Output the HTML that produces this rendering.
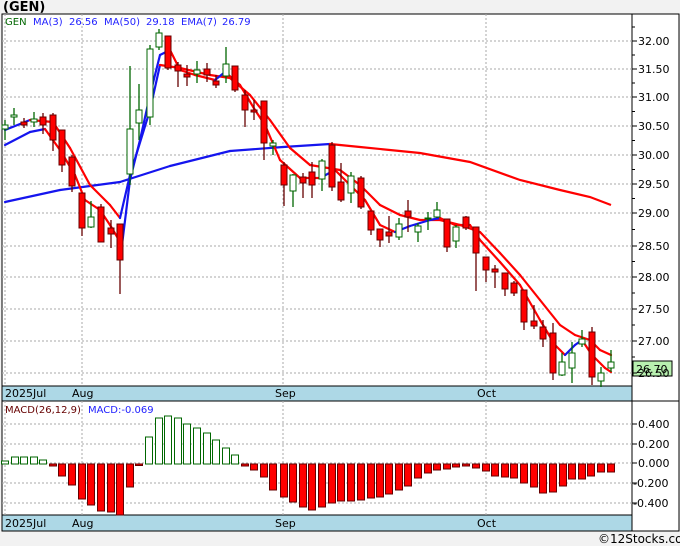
<!DOCTYPE html>
<html><head><meta charset="utf-8"><style>
html,body{margin:0;padding:0;background:#f2f2f2;width:680px;height:546px;overflow:hidden}
svg{display:block}
text{font-family:"DejaVu Sans","Liberation Sans",sans-serif;font-size:11px;white-space:pre}
</style></head><body>
<svg id="s" width="680" height="546" xmlns="http://www.w3.org/2000/svg">
<rect x="0" y="0" width="680" height="546" fill="#f2f2f2"/>
<text x="3" y="11" style="font-size:13px;font-weight:bold" fill="#000">(GEN)</text>
<rect x="2" y="14" width="677" height="517" fill="#fff" stroke="#000"/>
<line x1="632" y1="14" x2="632" y2="531" stroke="#000"/>
<rect x="2" y="386" width="630" height="15" fill="#add8e6" stroke="#000"/>
<rect x="2" y="515" width="630" height="16" fill="#add8e6" stroke="#000"/>
<line x1="632" y1="401" x2="679" y2="401" stroke="#000"/>
<g id="grid" stroke="#aaa" stroke-dasharray="2,2"></g>
<g id="c"></g>
<text x="5" y="397" fill="#000">2025Jul</text><text x="72" y="397" fill="#000">Aug</text><text x="275" y="397" fill="#000">Sep</text><text x="477" y="397" fill="#000">Oct</text>
<text x="5" y="527" fill="#000">2025Jul</text><text x="72" y="527" fill="#000">Aug</text><text x="275" y="527" fill="#000">Sep</text><text x="477" y="527" fill="#000">Oct</text>
<text x="5" y="25" style="font-size:10px" fill="#060">GEN</text>
<text x="33" y="25" style="font-size:10px" fill="#22f">MA(3)</text>
<text x="69" y="25" style="font-size:10px" fill="#22f">26.56</text>
<text x="104" y="25" style="font-size:10px" fill="#22f">MA(50)</text>
<text x="146" y="25" style="font-size:10px" fill="#22f">29.18</text>
<text x="181" y="25" style="font-size:10px" fill="#22f">EMA(7)</text>
<text x="222" y="25" style="font-size:10px" fill="#22f">26.79</text>
<text x="5" y="413" style="font-size:10px" fill="#600">MACD(26,12,9)</text>
<text x="88" y="413" style="font-size:10px" fill="#22f">MACD:-0.069</text>
<rect x="633" y="361" width="39" height="15" fill="#b8f0b0" stroke="#000"/>
<text x="636" y="373" fill="#000">26.70</text>
<text x="598" y="543" style="font-size:12px" fill="#000">©12Stocks.com</text>
</svg>
<script>
var NS="http://www.w3.org/2000/svg",g=document.getElementById('c'),gr=document.getElementById('grid'),s=document.getElementById('s');
function el(p,t,a){var e=document.createElementNS(NS,t);for(var k in a)e.setAttribute(k,a[k]);p.appendChild(e);return e}
var ticks=[[41,"32.00"],[69,"31.50"],[97,"31.00"],[126,"30.50"],[155,"30.00"],[184,"29.50"],[213,"29.00"],[246,"28.50"],[277,"28.00"],[309,"27.50"],[341,"27.00"],[373,"26.50"]];
ticks.forEach(function(t){el(gr,'line',{x1:2,x2:632,y1:t[0],y2:t[0]});el(s,'line',{x1:632,x2:637,y1:t[0],y2:t[0],stroke:'#000'});el(s,'text',{x:638,y:t[0]+4,fill:'#000'}).textContent=t[1];});
for(var i=0;i<ticks.length-1;i++){var m=(ticks[i][0]+ticks[i+1][0])/2;el(s,'line',{x1:632,x2:635,y1:m,y2:m,stroke:'#000'});}
el(s,'line',{x1:632,x2:635,y1:27,y2:27,stroke:'#000'});
[[424,"0.400"],[444,"0.200"],[463,"0.000"],[483,"-0.200"],[503,"-0.400"]].forEach(function(t){el(gr,'line',{x1:2,x2:632,y1:t[0],y2:t[0]});el(s,'line',{x1:632,x2:637,y1:t[0],y2:t[0],stroke:'#000'});el(s,'text',{x:t[1][0]=='-'?633:638,y:t[0]+4,fill:'#000'}).textContent=t[1];});
[5,82,283,486].forEach(function(x){el(gr,'line',{x1:x,x2:x,y1:14,y2:386});el(gr,'line',{x1:x,x2:x,y1:401,y2:515});});
var C=[[5,125,129,120,140,'g'],[14,115,117,108,125,'g'],[24,122,125,118,128,'r'],[34,119,122,112,127,'g'],[43,117,125,113,134,'r'],[53,115,140,113,151,'r'],[62,130,165,130,172,'r'],[72,157,186,155,192,'r'],[82,193,228,193,236,'r'],[91,217,227,201,228,'g'],[101,207,242,204,242,'r'],[111,228,234,220,248,'r'],[120,224,260,224,294,'r'],[130,129,174,66,185,'g'],[139,110,123,84,140,'g'],[150,49,117,45,125,'g'],[159,33,47,29,50,'g'],[168,36,68,36,70,'r'],[178,65,71,62,87,'r'],[187,74,77,65,86,'r'],[197,70,74,61,83,'g'],[207,69,75,63,82,'r'],[216,81,85,75,88,'r'],[226,64,76,47,83,'g'],[235,66,90,66,92,'r'],[245,95,110,90,127,'r'],[254,110,112,100,120,'r'],[264,101,143,101,160,'r'],[273,143,146,140,155,'g'],[284,165,185,162,206,'r'],[293,175,191,174,207,'g'],[303,177,183,173,198,'r'],[312,172,185,162,198,'r'],[322,161,179,159,191,'g'],[332,145,187,142,191,'r'],[341,182,200,163,202,'r'],[351,176,193,172,203,'g'],[361,178,207,176,209,'r'],[371,211,230,211,235,'r'],[380,229,240,229,247,'r'],[389,232,236,216,243,'r'],[399,224,237,218,240,'g'],[408,211,217,200,232,'r'],[418,226,232,223,242,'g'],[428,218,219,212,230,'g'],[437,210,217,202,218,'g'],[447,219,247,219,252,'r'],[456,227,241,225,248,'g'],[466,217,228,216,230,'r'],[476,227,253,227,291,'r'],[486,257,270,257,282,'r'],[495,269,272,265,288,'r'],[505,273,289,273,296,'r'],[514,283,293,281,296,'r'],[524,290,322,290,330,'r'],[534,321,326,305,329,'r'],[543,327,339,320,347,'r'],[553,333,373,323,380,'r'],[562,362,375,353,376,'g'],[572,353,368,342,383,'g'],[582,339,344,330,347,'g'],[592,332,377,327,385,'r'],[601,373,381,367,387,'g'],[611,362,368,350,372,'g']];
function line(pts,w){for(var i=1;i<pts.length;i++){var a=pts[i-1],b=pts[i];el(g,'line',{x1:a[0],y1:a[1],x2:b[0],y2:b[1],stroke:b[1]<a[1]?'#1515ee':'#f00','stroke-width':w,'stroke-linecap':'round'});}}
line([[5,202],[60,190],[120,182],[170,166],[230,151],[283,147],[330,144],[340,145]],2.2);
el(g,'polyline',{points:[[340,145],[360,147],[420,153],[470,162],[520,180],[560,190],[590,197],[611,205]].join(' '),fill:'none',stroke:'#f00','stroke-width':2.2});
line([[5,130],[30,120],[53,122],[70,148],[90,185],[110,205],[120,218],[130,175],[150,110],[160,65],[180,68],[210,75],[230,78],[250,95],[270,120],[290,148],[310,165],[340,170],[360,185],[380,205],[400,215],[420,220],[440,220],[460,225],[480,232],[500,253],[520,275],[540,300],[560,325],[575,335],[590,340],[600,350],[611,355]],2.2);
line([[5,145],[30,132],[45,129],[60,150],[75,175],[85,200],[100,210],[110,225],[122,245],[130,180],[140,140],[150,95],[160,55],[170,50],[180,70],[195,75],[215,80],[225,72],[240,85],[255,110],[265,125],[280,160],[300,178],[320,178],[335,170],[350,185],[365,200],[380,225],[395,232],[410,226],[430,220],[440,218],[455,225],[470,225],[480,240],[500,262],[520,285],[540,320],[555,345],[565,355],[575,345],[582,340],[592,355],[605,368],[611,372]],2.2);
C.forEach(function(c){var x=c[0],gr=c[5]=='g',col=gr?'#060':'#600';
el(g,'line',{x1:x,x2:x,y1:c[3],y2:c[4],stroke:col,'stroke-width':1.3});
el(g,'rect',{x:x-3,y:c[1],width:6,height:Math.max(c[2]-c[1],1),fill:gr?'#fff':'#f00',stroke:col,'stroke-width':1});});
var M=[[5,461,'g'],[15,457,'g'],[24,457,'g'],[34,457,'g'],[43,460,'g'],[53,466,'r'],[62,476,'r'],[72,485,'r'],[82,499,'r'],[91,505,'r'],[101,511,'r'],[111,512,'r'],[120,515,'r'],[130,487,'r'],[139,465,'r'],[149,437,'g'],[159,418,'g'],[168,416,'g'],[178,418,'g'],[187,424,'g'],[197,428,'g'],[207,433,'g'],[216,440,'g'],[226,448,'g'],[235,455,'g'],[245,466,'r'],[254,470,'r'],[264,477,'r'],[273,490,'r'],[284,497,'r'],[293,502,'r'],[303,507,'r'],[312,510,'r'],[322,507,'r'],[332,503,'r'],[341,501,'r'],[351,501,'r'],[361,500,'r'],[371,498,'r'],[380,497,'r'],[389,494,'r'],[399,490,'r'],[408,486,'r'],[418,478,'r'],[428,473,'r'],[437,470,'r'],[447,469,'r'],[456,467,'r'],[466,466,'r'],[476,468,'r'],[486,471,'r'],[495,476,'r'],[505,477,'r'],[514,478,'r'],[524,483,'r'],[534,487,'r'],[543,493,'r'],[553,492,'r'],[563,486,'r'],[572,479,'r'],[582,479,'r'],[591,476,'r'],[601,472,'r'],[611,472,'r']];
M.forEach(function(m){var z=464,y1=Math.min(z,m[1]),h=Math.max(Math.abs(m[1]-z),1.5);
el(g,'rect',{x:m[0]-3.5,y:y1,width:7,height:h,fill:m[2]=='g'?'#fff':'#f00',stroke:m[2]=='g'?'#060':'#600','stroke-width':1});});
</script>
</body></html>
